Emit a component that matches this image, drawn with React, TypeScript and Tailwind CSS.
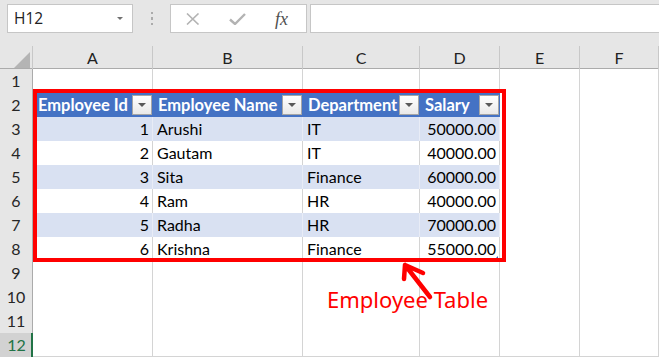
import React from "react";

const COLS = ["A", "B", "C", "D", "E", "F"];

type Emp = { id: number; name: string; dept: string; salary: string };

const EMPLOYEES: Emp[] = [
  { id: 1, name: "Arushi", dept: "IT", salary: "50000.00" },
  { id: 2, name: "Gautam", dept: "IT", salary: "40000.00" },
  { id: 3, name: "Sita", dept: "Finance", salary: "60000.00" },
  { id: 4, name: "Ram", dept: "HR", salary: "40000.00" },
  { id: 5, name: "Radha", dept: "HR", salary: "70000.00" },
  { id: 6, name: "Krishna", dept: "Finance", salary: "55000.00" },
];

const GRID = "grid grid-cols-[33px_120px_150px_117px_80px_80px_79px]";

function RowHeader({ n, selected }: { n: number; selected?: boolean }) {
  return selected ? (
    <div className="flex items-center justify-center bg-[#d2d2d2] border-r-2 border-[#217346] text-[#217346] pl-[2px]">
      {n}
    </div>
  ) : (
    <div className="flex items-center justify-center bg-[#e6e6e6] border-r border-b border-r-[#ababab] border-b-[#c8c8c8] text-[#262626]">
      {n}
    </div>
  );
}

function EmptyCell() {
  return <div className="border-r border-b border-[#d4d4d4] bg-white" />;
}

function FilterButton() {
  return (
    <div className="w-[20px] h-[20px] mr-[1px] shrink-0 flex items-center justify-center border border-[#a6a6a6] bg-gradient-to-b from-white to-[#e9e9e9]">
      <div className="w-0 h-0 border-l-[4px] border-r-[4px] border-t-[4px] border-l-transparent border-r-transparent border-t-[#595959]" />
    </div>
  );
}

function HeaderCell({ label }: { label: string }) {
  return (
    <div className="flex items-center justify-between bg-[#4472c4] pl-[5px] border-b border-[#8ea9db]">
      <span className="font-bold text-[16.5px] text-white whitespace-nowrap">{label}</span>
      <FilterButton />
    </div>
  );
}

function Toolbar() {
  return (
    <div className="h-[46px] bg-[#e6e6e6] flex items-start pt-[4px] font-['Open_Sans',sans-serif]">
      <div className="ml-[7px] w-[126px] h-[29px] bg-white border border-[#c6c6c6] flex items-center justify-between pl-[6px] pr-[9px]">
        <span className="text-[15.5px] text-[#222]">H12</span>
        <div className="w-0 h-0 border-l-[3px] border-r-[3px] border-t-[3px] border-l-transparent border-r-transparent border-t-[#707070]" />
      </div>
      <div className="w-[37px] h-[29px] flex flex-col items-center justify-center gap-[3px]">
        <div className="w-[2px] h-[2px] bg-[#ababab]" />
        <div className="w-[2px] h-[3px] bg-[#ababab]" />
        <div className="w-[2px] h-[2px] bg-[#ababab]" />
      </div>
      <div className="w-[137px] h-[29px] bg-white border border-[#c6c6c6] flex items-center pl-[14px] gap-[28px]">
        <svg width="16" height="12" viewBox="0 0 16 12">
          <path d="M2 0.5 L13.5 11.5 M13.5 0.5 L2 11.5" stroke="#b3b3b3" strokeWidth="1.6" fill="none" />
        </svg>
        <svg width="17" height="12" viewBox="0 0 17 12">
          <path d="M1 6.5 L6 11 L16 1" stroke="#b3b3b3" strokeWidth="2.4" fill="none" />
        </svg>
        <span className="italic text-[18px] leading-none text-[#505050] font-['Liberation_Serif',serif] ml-[1px]">
          fx
        </span>
      </div>
      <div className="ml-[3px] flex-1 h-[29px] bg-white border border-r-0 border-[#c6c6c6]" />
    </div>
  );
}

export default function App() {
  return (
    <div className="relative w-[659px] h-[357px] overflow-hidden bg-white font-['Lato',sans-serif] text-[16px] text-black">
      <Toolbar />

      {/* column headers */}
      <div className={`${GRID} h-[23px] bg-[#e6e6e6] border-b border-[#ababab]`}>
        <div className="flex items-end justify-end pb-[2px] pr-[2px] border-r border-[#c8c8c8]">
          <div className="w-0 h-0 border-l-[16px] border-b-[16px] border-l-transparent border-b-[#b4b4b4]" />
        </div>
        {COLS.map((c) => (
          <div key={c} className="flex items-center justify-center border-r border-[#c8c8c8] text-[#222]">
            {c}
          </div>
        ))}
      </div>

      {/* row 1 */}
      <div className={`${GRID} h-[24px]`}>
        <RowHeader n={1} />
        {COLS.map((c) => (
          <EmptyCell key={c} />
        ))}
      </div>

      {/* row 2 - table header */}
      <div className={`${GRID} h-[24px]`}>
        <RowHeader n={2} />
        <HeaderCell label="Employee Id" />
        <HeaderCell label="Employee Name" />
        <HeaderCell label="Department" />
        <HeaderCell label="Salary" />
        <EmptyCell />
        <EmptyCell />
      </div>

      {/* rows 3-8 - table body */}
      {EMPLOYEES.map((e, i) => {
        const band = i % 2 === 0;
        const cell = band
          ? "bg-[#d9e1f2] border-b border-r border-b-[#8ea9db] border-r-[#e8ecf6]"
          : "bg-white border-b border-r border-b-[#8ea9db] border-r-[#d4d4d4]";
        const last = i === EMPLOYEES.length - 1;
        return (
          <div key={e.id} className={`${GRID} h-[24px]`}>
            <RowHeader n={i + 3} />
            <div className={`${cell} flex items-center justify-end pr-[3px]`}>{e.id}</div>
            <div className={`${cell} flex items-center pl-[4px]`}>{e.name}</div>
            <div className={`${cell} flex items-center pl-[4px]`}>{e.dept}</div>
            <div className={`${cell} relative flex items-center justify-end pr-[3px]`}>
              {e.salary}
              {last && (
                <div className="absolute right-[1px] bottom-[1px] w-0 h-0 border-l-[4px] border-b-[4px] border-l-transparent border-b-[#3f5fb0]" />
              )}
            </div>
            <EmptyCell />
            <EmptyCell />
          </div>
        );
      })}

      {/* rows 9-12 */}
      {[9, 10, 11, 12].map((n) => (
        <div key={n} className={`${GRID} h-[24px]`}>
          <RowHeader n={n} selected={n === 12} />
          {COLS.map((c) => (
            <EmptyCell key={c} />
          ))}
        </div>
      ))}

      {/* annotation */}
      <div className="absolute left-[33px] top-[89px] w-[473px] h-[173px] border-4 border-[#ff0000] pointer-events-none" />
      <svg
        className="absolute left-[395px] top-[255px]"
        width="45"
        height="50"
        viewBox="0 0 45 50"
      >
        <path
          d="M10 10 L35 42 M10 10 L9 24 M10 10 L28 18"
          stroke="#ff0000"
          strokeWidth="4.5"
          strokeLinecap="round"
          fill="none"
        />
      </svg>
      <div className="absolute left-[327px] top-[288px] text-[22px] leading-none text-[#ff0000] font-['Noto_Sans',sans-serif] whitespace-nowrap">
        Employee Table
      </div>
    </div>
  );
}
